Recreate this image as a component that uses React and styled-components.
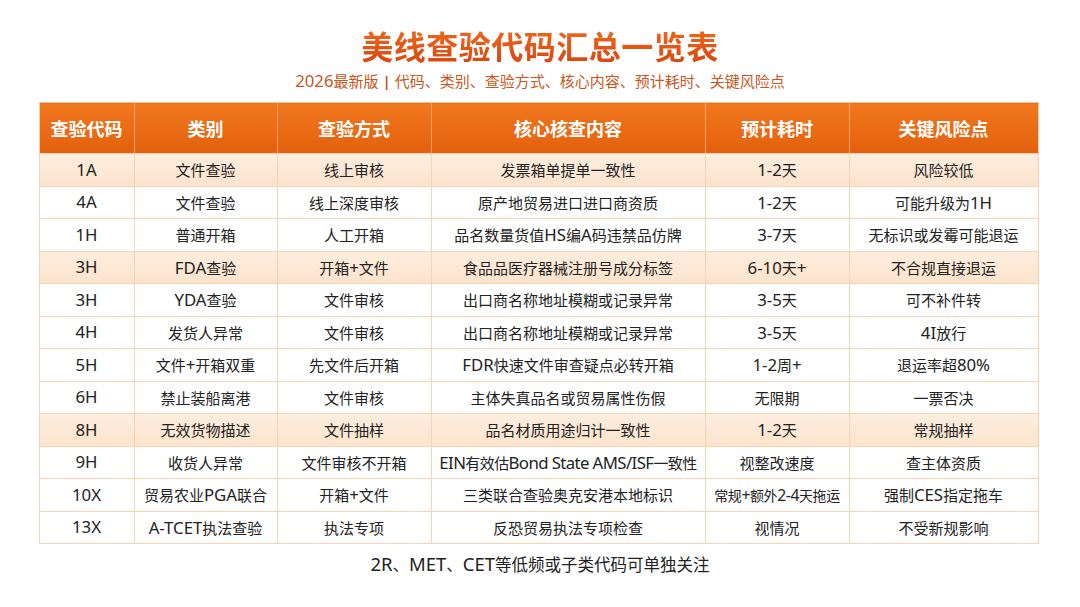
import React from 'react';
import styled, { createGlobalStyle } from 'styled-components';

const GlobalStyle = createGlobalStyle`
    html, body {
        margin: 0;
        padding: 0;
        background: #ffffff;
    }
    body {
        font-family: "Noto Sans", "Noto Sans CJK SC", sans-serif;
        color: #222;
    }
`

const Page = styled.div`
    width: 1080px;
    height: 607px;
    padding-top: 26px;
    box-sizing: border-box;
    display: flex;
    flex-direction: column;
    align-items: center;
`

const Title = styled.h1`
    margin: 0;
    font-family: "Noto Sans CJK SC", sans-serif;
    font-size: 32px;
    font-weight: 700;
    line-height: 38px;
    letter-spacing: 0.5px;
    background: linear-gradient(180deg, #f06a1e 0%, #d9470f 100%);
    -webkit-background-clip: text;
    background-clip: text;
    color: transparent;
`

const Subtitle = styled.div`
    margin-top: 7px;
    font-family: "Noto Sans", "Noto Sans CJK SC", sans-serif;
    font-size: 15px;
    line-height: 20px;
    color: #c9561c;
`

const Bar = styled.span`
    font-weight: 700;
    margin: 0 4px;
`

// latin runs render a bit larger than the CJK text, like in the source
const Latin = styled.span`
    font-size: 1.12em;
    line-height: 1;
`

const Table = styled.table`
    margin-top: 11px;
    margin-left: -3px;
    width: 999px;
    border-collapse: collapse;
    table-layout: fixed;
    border: 1px solid #f6caa4;
`

const HeadCell = styled.th`
    height: 50px;
    padding: 0;
    font-family: "Noto Sans CJK SC", sans-serif;
    font-size: 18px;
    font-weight: 700;
    color: #ffffff;
    text-align: center;
    background: linear-gradient(180deg, #f1791f 0%, #e3600d 100%);
    border-left: 1px solid #f7a468;
    &:first-child {
        border-left: none;
    }
`

const Row = styled.tr`
    background: ${({ $hl }) => ($hl ? 'linear-gradient(180deg, #fdeede 0%, #fce3cc 100%)' : '#ffffff')};
`

const Cell = styled.td`
    height: 32.5px;
    padding: 0 1px;
    box-sizing: border-box;
    font-family: "Noto Sans", "Noto Sans CJK SC", sans-serif;
    font-size: ${({ $small }) => ($small ? '14px' : '15px')};
    color: #222;
    text-align: center;
    white-space: nowrap;
    overflow: hidden;
    border: 1px solid #f8d2b2;
    letter-spacing: ${({ $small, $long }) => ($long ? '-0.6px' : $small ? '-0.4px' : '0')};
`

const Footer = styled.div`
    margin-top: 10px;
    font-family: "Noto Sans", "Noto Sans CJK SC", sans-serif;
    font-size: 16.5px;
    line-height: 22px;
    color: #222;
`

const columns = [
    { title: '查验代码', width: 95 },
    { title: '类别', width: 143 },
    { title: '查验方式', width: 154 },
    { title: '核心核查内容', width: 274 },
    { title: '预计耗时', width: 144 },
    { title: '关键风险点', width: 189 },
]

const rows = [
    { hl: true, cells: ['1A', '文件查验', '线上审核', '发票箱单提单一致性', '1-2天', '风险较低'] },
    { cells: ['4A', '文件查验', '线上深度审核', '原产地贸易进口进口商资质', '1-2天', '可能升级为1H'] },
    { cells: ['1H', '普通开箱', '人工开箱', '品名数量货值HS编A码违禁品仿牌', '3-7天', '无标识或发霉可能退运'] },
    { hl: true, cells: ['3H', 'FDA查验', '开箱+文件', '食品品医疗器械注册号成分标签', '6-10天+', '不合规直接退运'] },
    { cells: ['3H', 'YDA查验', '文件审核', '出口商名称地址模糊或记录异常', '3-5天', '可不补件转'] },
    { cells: ['4H', '发货人异常', '文件审核', '出口商名称地址模糊或记录异常', '3-5天', '4I放行'] },
    { cells: ['5H', '文件+开箱双重', '先文件后开箱', 'FDR快速文件审查疑点必转开箱', '1-2周+', '退运率超80%'] },
    { cells: ['6H', '禁止装船离港', '文件审核', '主体失真品名或贸易属性伤假', '无限期', '一票否决'] },
    { hl: true, cells: ['8H', '无效货物描述', '文件抽样', '品名材质用途归计一致性', '1-2天', '常规抽样'] },
    { cells: ['9H', '收货人异常', '文件审核不开箱', 'EIN有效估Bond State AMS/ISF一致性', '视整改速度', '查主体资质'] },
    { cells: ['10X', '贸易农业PGA联合', '开箱+文件', '三类联合查验奥克安港本地标识', '常规+额外2-4天拖运', '强制CES指定拖车'] },
    { cells: ['13X', 'A-TCET执法查验', '执法专项', '反恐贸易执法专项检查', '视情况', '不受新规影响'] },
]

function Mixed({ text }) {
    return text.split(/([\x21-\x7E](?:[\x20-\x7E]*[\x21-\x7E])?)/).map((part, i) =>
        i % 2 === 1 ? <Latin key={i}>{part}</Latin> : part
    );
}

function App() {
    return (
        <>
            <GlobalStyle />
            <Page>
                <Title>美线查验代码汇总一览表</Title>
                <Subtitle>
                    <Latin>2026</Latin>最新版<Bar>|</Bar>代码、类别、查验方式、核心内容、预计耗时、关键风险点
                </Subtitle>
                <Table>
                    <colgroup>
                        {columns.map((c, i) => <col key={i} style={{ width: c.width }} />)}
                    </colgroup>
                    <thead>
                        <tr>
                            {columns.map((c, i) => <HeadCell key={i}>{c.title}</HeadCell>)}
                        </tr>
                    </thead>
                    <tbody>
                        {rows.map((r, i) => (
                            <Row key={i} $hl={r.hl}>
                                {r.cells.map((text, j) => (
                                    <Cell
                                        key={j}
                                        $small={text === '常规+额外2-4天拖运'}
                                        $long={text.length > 20}
                                    >
                                        <Mixed text={text} />
                                    </Cell>
                                ))}
                            </Row>
                        ))}
                    </tbody>
                </Table>
                <Footer><Mixed text="2R、MET、CET等低频或子类代码可单独关注" /></Footer>
            </Page>
        </>
    );
}

export default App;
